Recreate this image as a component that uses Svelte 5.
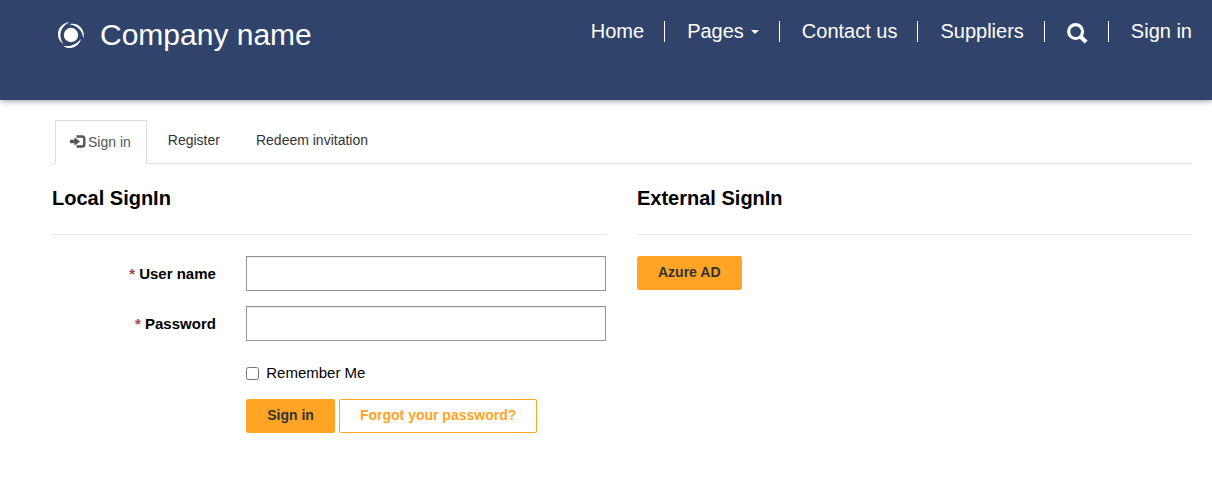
<script>
  const tabs = ['Register', 'Redeem invitation'];
</script>

<header class="navbar">
  <a class="brand" href="#home">
    <svg class="logo" viewBox="0 0 28 28" aria-hidden="true">
      <circle cx="14" cy="14" r="7.2" />
      <path d="M12.500 1C5.500 2 1 7 1 13c0 4.500 2 8 5.500 10C0.500 15 3.500 5.500 12.500 1z" />
      <path d="M12.500 3.200C17 2 21.500 3.200 24.300 7c2.500 3.500 3 6.500 2 10.500C25.500 9.500 20.500 4.500 12.500 3.200z" />
      <path d="M24 18C22.500 23.500 18 27 13 27c-3 0-5-.8-6.800-2.300C13 26.200 19 23.500 24 18z" />
    </svg>
    <span>Company name</span>
  </a>
  <nav aria-label="Main">
    <ul>
      <li><a href="#home">Home</a></li>
      <li><a href="#pages">Pages<span class="caret"></span></a></li>
      <li><a href="#contact">Contact us</a></li>
      <li><a href="#suppliers">Suppliers</a></li>
      <li>
        <a class="search" href="#search" aria-label="Search">
          <svg viewBox="0 0 20 20" aria-hidden="true">
            <circle cx="8.200" cy="8.200" r="6.600" />
            <path class="handle" d="M12.800 12.800l5.400 5.400" />
          </svg>
        </a>
      </li>
      <li><a href="#signin">Sign in</a></li>
    </ul>
  </nav>
</header>

<main>
  <ul class="tabs">
    <li>
      <a class="active" href="#signin">
        <svg viewBox="0 0 16 14" aria-hidden="true">
          <path class="frame" d="M6.500 1.500H12q2.300 0 2.300 2.300v5.400q0 2.300-2.300 2.300H6.500" />
          <path d="M0 4.800h4.500V2.200L10 6.500l-5.500 4.300V8.200H0z" />
        </svg>
        Sign in
      </a>
    </li>
    {#each tabs as tab}
      <li><a href="#{tab}">{tab}</a></li>
    {/each}
  </ul>

  <div class="columns">
    <form onsubmit={(e) => e.preventDefault()}>
      <h2>Local SignIn</h2>
      <div class="row">
        <label for="user"><span class="required">*</span> User name</label>
        <input id="user" class="text" type="text" />
      </div>
      <div class="row">
        <label for="password"><span class="required">*</span> Password</label>
        <input id="password" class="text" type="password" />
      </div>
      <div class="extras">
        <label class="remember"><input type="checkbox" />Remember Me</label>
        <div class="actions">
          <button class="btn" type="submit">Sign in</button>
          <a class="btn outline" href="#forgot">Forgot your password?</a>
        </div>
      </div>
    </form>
    <section>
      <h2>External SignIn</h2>
      <button class="btn" type="button">Azure AD</button>
    </section>
  </div>
</main>

<style>
  :global(body) {
    background: #fff;
    color: #000;
    font-family: "Liberation Sans", Arial, sans-serif;
    font-size: 15px;
    line-height: 20px;
  }
  :global(*) { box-sizing: border-box; }
  a { color: inherit; text-decoration: none; }
  ul { list-style: none; margin: 0; padding: 0; display: flex; }

  .navbar {
    display: flex;
    justify-content: space-between;
    align-items: flex-start;
    min-height: 100px;
    padding: 20px 20px 0 57px;
    background: #30446b;
    color: #fff;
    box-shadow: 0 1px 6px rgba(0, 0, 0, 0.4);
  }
  .brand {
    display: flex;
    align-items: center;
    gap: 15px;
    font-size: 30px;
    line-height: 30px;
    white-space: nowrap;
  }
  .logo { width: 28px; height: 28px; fill: #fff; }

  nav { font-size: 20px; line-height: 21px; white-space: nowrap; padding-top: 1px; }
  nav li + li { border-left: 1px solid #fff; margin-left: 20px; padding-left: 22px; }
  nav a { display: flex; align-items: center; }
  .caret {
    margin-left: 7px;
    border: 4px solid transparent;
    border-top-color: #fff;
    border-bottom: 0;
  }
  .search { height: 21px; padding-top: 4px; }
  .search svg { width: 21px; height: 21px; fill: none; stroke: #fff; stroke-width: 3; }
  .search .handle { stroke-width: 4; }

  main { padding: 20px 20px 20px 52px; }
  .tabs {
    border-bottom: 1px solid #ddd;
    height: 44px;
    padding-left: 3px;
    font-size: 14px;
    color: #333;
  }
  .tabs a { display: flex; padding: 10px 18px; }
  .tabs .active {
    align-items: center;
    gap: 2px;
    height: 44px;
    margin-right: 3px;
    padding: 0 15px 0 14px;
    border: 1px solid #ddd;
    border-bottom-color: #fff;
    background: #fff;
    color: #555;
  }
  .tabs svg { width: 16px; height: 14px; fill: #555; }
  .tabs .frame { fill: none; stroke: #555; stroke-width: 2.400; }

  .columns { display: grid; grid-template-columns: 1fr 1fr; gap: 30px; }
  h2 {
    margin: 0 0 21px;
    padding: 24px 0 26px;
    border-bottom: 1px solid #e5e5e5;
    font-size: 20px;
    line-height: 20px;
  }
  .row {
    display: grid;
    grid-template-columns: 35% 1fr;
    align-items: center;
    margin-bottom: 15px;
    padding-right: 1px;
  }
  .row label { padding-right: 30px; text-align: right; font-weight: bold; }
  .required { color: #a94442; }
  .text {
    width: 100%;
    height: 35px;
    padding: 6px 12px;
    border: 1px solid #949494;
    border-radius: 0;
    font: inherit;
    background: #fff;
    box-shadow: inset 0 1px 1px rgba(0, 0, 0, 0.08);
  }
  .extras { margin-left: 35%; padding-top: 7px; }
  .remember { display: flex; align-items: center; gap: 7px; }
  .remember input { width: 13px; height: 13px; margin: 0; }
  .actions { display: flex; gap: 4px; margin-top: 16px; }
  .btn {
    height: 34px;
    padding: 0 20px 2px;
    border: 1px solid #ffa425;
    border-radius: 2px;
    background: #ffa425;
    color: #333;
    font: bold 14px/30px "Liberation Sans", Arial, sans-serif;
    white-space: nowrap;
  }
  .outline { background: #fff; color: #ffa425; }
</style>
